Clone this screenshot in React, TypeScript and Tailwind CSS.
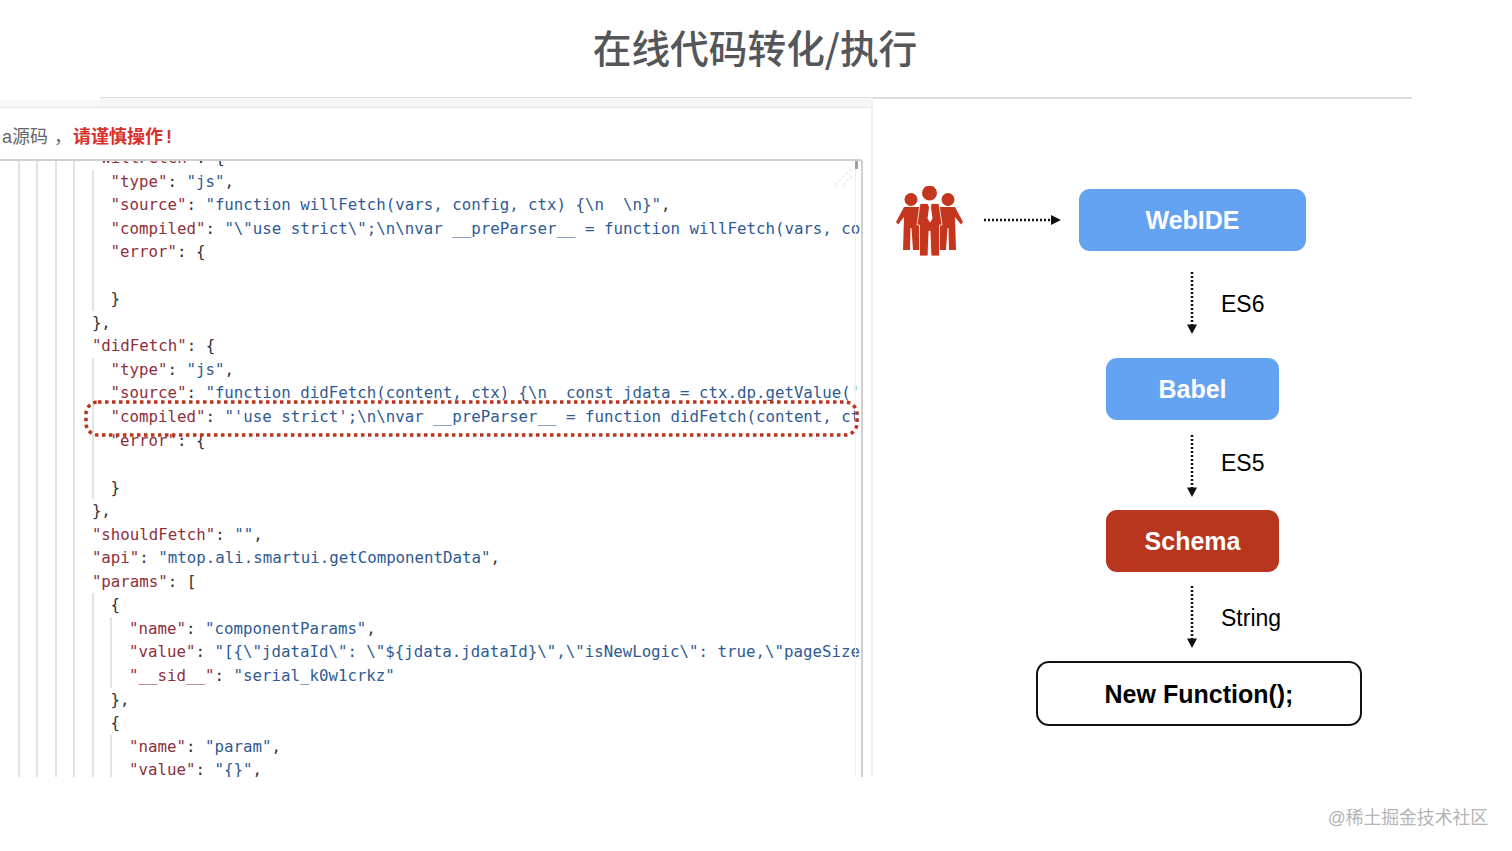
type Row = { level: number; k?: string; s?: string; p?: string };

const rows: Row[] = [
  { level: 4, k: '"willFetch"', p: ": {" },
  { level: 5, k: '"type"', s: '"js"', p: "," },
  { level: 5, k: '"source"', s: '"function willFetch(vars, config, ctx) {\\n  \\n}"', p: "," },
  { level: 5, k: '"compiled"', s: '"\\"use strict\\";\\n\\nvar __preParser__ = function willFetch(vars, config, ctx) {' },
  { level: 5, k: '"error"', p: ": {" },
  { level: 5 },
  { level: 5, p: "}" },
  { level: 4, p: "}," },
  { level: 4, k: '"didFetch"', p: ": {" },
  { level: 5, k: '"type"', s: '"js"', p: "," },
  { level: 5, k: '"source"', s: "\"function didFetch(content, ctx) {\\n  const jdata = ctx.dp.getValue('jdata');" },
  { level: 5, k: '"compiled"', s: "\"'use strict';\\n\\nvar __preParser__ = function didFetch(content, ctx) {" },
  { level: 5, k: '"error"', p: ": {" },
  { level: 5 },
  { level: 5, p: "}" },
  { level: 4, p: "}," },
  { level: 4, k: '"shouldFetch"', s: '""', p: "," },
  { level: 4, k: '"api"', s: '"mtop.ali.smartui.getComponentData"', p: "," },
  { level: 4, k: '"params"', p: ": [" },
  { level: 5, p: "{" },
  { level: 6, k: '"name"', s: '"componentParams"', p: "," },
  { level: 6, k: '"value"', s: '"[{\\"jdataId\\": \\"${jdata.jdataId}\\",\\"isNewLogic\\": true,\\"pageSize\\":10}]"', p: "," },
  { level: 6, k: '"__sid__"', s: '"serial_k0w1crkz"' },
  { level: 5, p: "}," },
  { level: 5, p: "{" },
  { level: 6, k: '"name"', s: '"param"', p: "," },
  { level: 6, k: '"value"', s: '"{}"', p: "," },
];

function CodeRow({ row }: { row: Row }) {
  return (
    <div className="flex h-[23.56px] shrink-0 pl-[17.5px] text-[15.77px] leading-[23.56px] whitespace-pre">
      {Array.from({ length: row.level }).map((_, i) => (
        <span key={i} className="h-full w-[18.6px] shrink-0 border-l-2 border-[#e3e3e3]" />
      ))}
      <span>
        {row.k && <span className="text-[#8e2f3c]">{row.k}</span>}
        {row.s && (
          <>
            <span className="text-[#333]">: </span>
            <span className="text-[#2f5a94]">{row.s}</span>
          </>
        )}
        {row.p && <span className="text-[#333]">{row.p}</span>}
      </span>
    </div>
  );
}

function Node({ className, label }: { className: string; label: string }) {
  return (
    <div className={`absolute flex items-center justify-center pt-[2px] text-[25px] font-bold ${className}`}>
      {label}
    </div>
  );
}

function DownArrow({ className }: { className: string }) {
  return (
    <svg className={`absolute ${className}`} width="12" height="62" viewBox="0 0 12 62">
      <line x1="6" y1="0" x2="6" y2="54" stroke="#111" strokeWidth="2.500" strokeDasharray="2 2" />
      <path d="M1 52.500h10l-5 9.500z" fill="#111" />
    </svg>
  );
}

function People() {
  return (
    <svg className="absolute left-[23px] top-[87px]" width="67" height="71" viewBox="0 0 67 71">
      <g fill="#c5361f">
        <circle cx="15" cy="13.500" r="6.500" />
        <circle cx="52" cy="13.500" r="6.500" />
        <path d="M8 21h16v43h-7l-1.500-22h-1L14 64H7L8 31 2 38.500 0 36z" />
        <path d="M59 21H43v43h7l1.500-22h1L53 64h7L59 31l6 7.500 2-2.500z" />
      </g>
      <circle cx="33.500" cy="7" r="7.500" fill="#c5361f" />
      <path
        d="M24 17.500h19l3 21.500h-2.500v31H35l-1-25h-1l-1 25h-8.500V39H21z"
        fill="#c5361f"
        stroke="#fff"
        strokeWidth="0.800"
      />
      <path d="M31.500 17.500h4l-.5 4 1.500 11-2.500 4-2.500-4 1.500-11z" fill="#fff" />
    </svg>
  );
}

export default function App() {
  return (
    <div className="flex h-[851px] w-[1512px] flex-col overflow-hidden bg-white font-['Liberation_Sans','Noto_Sans_CJK_SC',sans-serif]">
      {/* TITLE */}
      <div className="flex h-[97px] shrink-0 items-center justify-center pb-[5px] pr-[2px] text-[38.7px] font-medium text-[#54565a] font-['Noto_Sans_CJK_SC',sans-serif]">
        在线代码转化/执行
      </div>

      <div className="flex h-[680px] shrink-0">
        {/* LEFT: SCHEMA EDITOR */}
        <div className="flex w-[873px] shrink-0 flex-col border-r-2 border-[#f0f0f0]">
          <div className="flex h-[11px] shrink-0 border-b border-[#e6e6e8]">
            <div className="mt-[3px] w-[100px] bg-[#f8f8f8]" />
            <div className="flex-1 border-t border-[#dedede] bg-[#f6f6f8]" />
          </div>
          <div className="flex h-[51px] shrink-0 items-center pt-[8px] text-[18px] text-[#666]">
            <span className="pl-[2px]">a源码</span>
            <span className="ml-[6px] w-[19px]">，</span>
            <span className="font-bold text-[#d8322c]">请谨慎操作</span>
            <span className="ml-[3px] font-bold text-[#d8322c]">!</span>
          </div>
          <div className="relative mr-[8px] flex min-h-0 flex-1 flex-col overflow-hidden rounded-tr border-t-2 border-r-2 border-[#cfcfcf] font-['DejaVu_Sans_Mono',monospace]">
            <div className="-mt-[15px] flex flex-col">
              {rows.map((row, i) => (
                <CodeRow key={i} row={row} />
              ))}
            </div>
            {/* scrollbar gutter */}
            <div className="absolute right-0 top-0 h-full w-[6px] border-l border-[#efefef]" />
            <div className="absolute right-[3px] top-0 h-[8px] w-[3px] bg-[#a0a0a0]" />
            <svg className="absolute right-[6px] top-[4px]" width="22" height="22" viewBox="0 0 22 22">
              <path d="M2 20 20 2M10 20 20 10" stroke="#ececec" strokeWidth="1.500" strokeDasharray="3 2" fill="none" />
            </svg>
            {/* red highlight */}
            <svg className="absolute left-[84px] top-[239px]" width="776" height="38" viewBox="0 0 776 38">
              <rect
                x="2"
                y="2"
                width="771"
                height="33"
                rx="12"
                fill="none"
                stroke="#b8341c"
                strokeWidth="3.500"
                strokeDasharray="3.500 3.500"
              />
            </svg>
          </div>
        </div>

        {/* RIGHT: FLOW DIAGRAM */}
        <div className="relative flex-1 mr-[100px] border-t-2 border-[#dcdcdc]">
          <People />
          <svg className="absolute left-[111px] top-[115px]" width="78" height="12" viewBox="0 0 78 12">
            <line x1="0" y1="6" x2="68" y2="6" stroke="#111" strokeWidth="2.500" strokeDasharray="2 2" />
            <path d="M67 1l10 5-10 5z" fill="#111" />
          </svg>
          <Node className="left-[206px] top-[90px] h-[62px] w-[227px] rounded-[11px] bg-[#64a3f2] text-white" label="WebIDE" />
          <DownArrow className="left-[313px] top-[173px]" />
          <span className="absolute left-[348px] top-[188px] text-[23px]">ES6</span>
          <Node className="left-[233px] top-[259px] h-[62px] w-[173px] rounded-[11px] bg-[#64a3f2] text-white" label="Babel" />
          <DownArrow className="left-[313px] top-[336px]" />
          <span className="absolute left-[348px] top-[347px] text-[23px]">ES5</span>
          <Node className="left-[233px] top-[411px] h-[62px] w-[173px] rounded-[11px] bg-[#b8361e] text-white" label="Schema" />
          <DownArrow className="left-[313px] top-[487px]" />
          <span className="absolute left-[348px] top-[502px] text-[23px]">String</span>
          <Node
            className="left-[163px] top-[562px] h-[65px] w-[326px] rounded-[13px] border-[2.5px] border-[#111] text-black"
            label="New Function();"
          />
        </div>
      </div>

      <div className="flex flex-1 items-center justify-end pt-[8px] pr-[24px] text-[17.8px] text-[#b4b4b4]">
        @稀土掘金技术社区
      </div>
    </div>
  );
}
